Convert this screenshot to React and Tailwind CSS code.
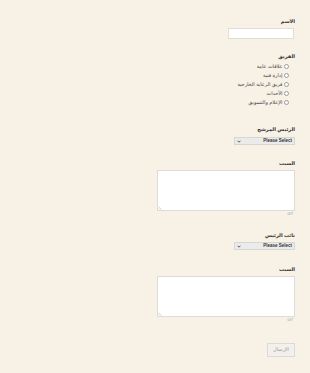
import React from 'react';

const teams = ['علاقات عامة', 'إدارة فنية', 'فريق الرعاية الخارجية', 'الأحداث', 'الإعلام والتسويق'];

function Label({ children, className = '' }) {
  return <div className={`text-[5px] leading-[6px] font-bold text-[#2f2f2f] ${className}`}>{children}</div>;
}

function FakeSelect({ className = '' }) {
  return (
    <div className={`w-[61px] h-[8px] bg-[#ebebeb] border border-[#d6d6d6] flex items-center justify-between px-[2px] ${className}`}>
      <span className="text-[4.5px] font-bold text-[#333]" dir="ltr">Please Select</span>
      <svg width="4" height="3" viewBox="0 0 4 3" className="shrink-0">
        <path d="M0.5 0.7 L2 2.2 L3.5 0.7" fill="none" stroke="#333" strokeWidth="0.8" />
      </svg>
    </div>
  );
}

function Reason({ className = '' }) {
  return (
    <div className={className}>
      <Label>السبب</Label>
      <div className="relative mt-[4px] w-[138px] h-[41px]">
        <textarea
          dir="rtl"
          className="block w-full h-full resize-none bg-white border border-[#dddbd7] outline-none"
        />
        <svg width="4" height="4" viewBox="0 0 4 4" className="absolute left-[1px] bottom-[1px]">
          <path d="M0.5 0.5 L3.5 3.5 M0.5 2 L2 3.5" stroke="#b5b5b5" strokeWidth="0.5" />
        </svg>
      </div>
      <div className="text-[4px] leading-[5px] text-[#9a9a9a] pr-[2px]" dir="ltr" style={{ textAlign: 'right' }}>
        0/7
      </div>
    </div>
  );
}

export default function App() {
  return (
    <div
      dir="rtl"
      className="min-h-screen bg-[#f8f1e6] pt-[18px] pr-[15px]"
      style={{ fontFamily: '"Liberation Sans", "DejaVu Sans", sans-serif' }}
    >
      <Label>الاسم</Label>
      <div className="mt-[4px] mr-[1px] w-[66px] h-[11px] bg-white border border-[#e2ddd5]" />

      <Label className="mt-[14px]">الفريق</Label>
      <div className="mt-[3px] pr-[6px]">
        {teams.map((t) => (
          <div key={t} className="h-[9px] flex items-center gap-[1.5px]">
            <span className="w-[5px] h-[5px] rounded-full border border-[#9c9c9c] bg-white shrink-0" />
            <span className="text-[5px] text-[#444]">{t}</span>
          </div>
        ))}
      </div>

      <Label className="mt-[19px]">الرئيس المرشح</Label>
      <FakeSelect className="mt-[5px]" />

      <Reason className="mt-[15px]" />

      <Label className="mt-[16px]">نائب الرئيس</Label>
      <FakeSelect className="mt-[4px]" />

      <Reason className="mt-[16px]" />

      <div className="mt-[21px] w-[28px] h-[14px] bg-[#f2f0ed] border border-[#dcdad6] flex items-center justify-center text-[5px] text-[#9a9a9a]">
        الإرسال
      </div>
    </div>
  );
}
